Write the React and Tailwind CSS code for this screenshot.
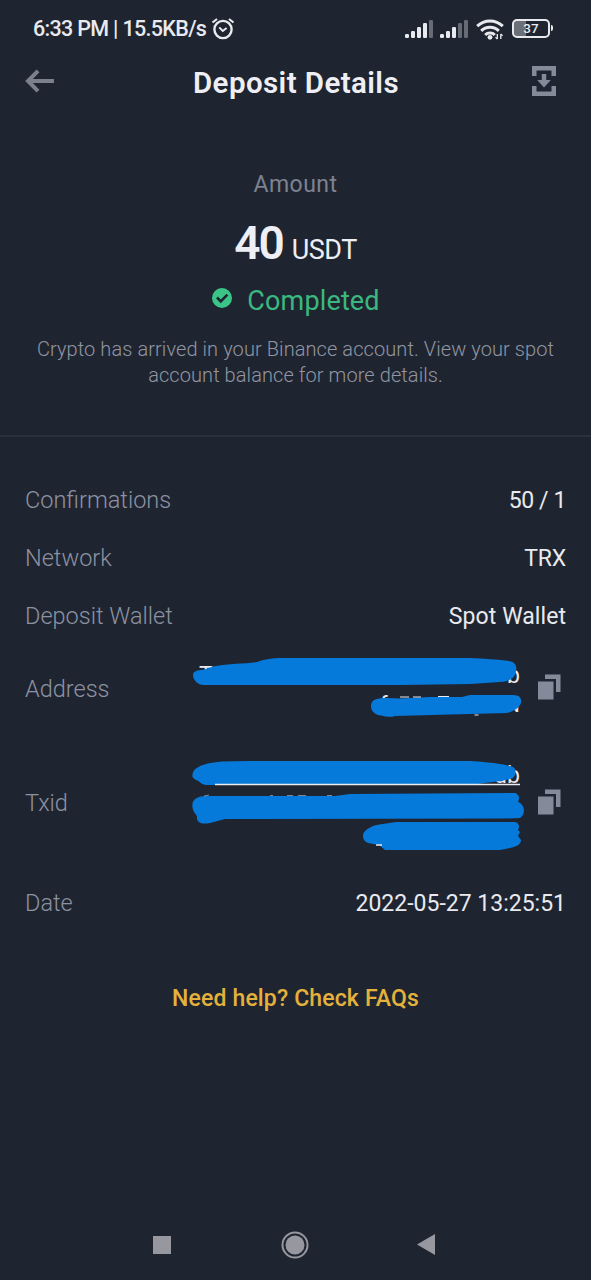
import React from 'react';

const SIGNAL_BARS = [
  { x: 0, h: 4 },
  { x: 6, h: 7 },
  { x: 12, h: 11 },
  { x: 18, h: 15 },
  { x: 24, h: 18 },
];

const SignalIcon = ({ level }) => (
  <svg width="29" height="18" viewBox="0 0 29 18">
    {SIGNAL_BARS.map((bar, idx) => (
      <rect
        key={bar.x}
        x={bar.x}
        y={18 - bar.h}
        width="4"
        height={bar.h}
        rx="1.2"
        fill={idx < level ? '#e9eaef' : '#666b75'}
      />
    ))}
  </svg>
);

const AlarmIcon = () => (
  <svg width="24" height="23" viewBox="0 0 24 23" fill="none" stroke="#e9eaef" strokeWidth="2.4">
    <circle cx="12" cy="12.5" r="8.6" />
    <path d="M1.5 5.5 6 2M22.5 5.5 18 2" strokeWidth="2.2" />
    <path d="m8.2 10.4 3.6 3.6 3.8-3" strokeWidth="2" />
  </svg>
);

const WifiIcon = () => (
  <svg width="28" height="21" viewBox="0 0 28 21" fill="none" stroke="#e9eaef" strokeWidth="3">
    <path d="M1.2 7.2C8.4.2 19.6.2 26.8 7.2" />
    <path d="M5.2 11.8c4.9-4.7 12.7-4.7 17.6 0" />
    <path d="M9.2 16c2.5-2.6 7.1-2.6 9.6 0" />
    <circle cx="14" cy="18.3" r="2.4" fill="#e9eaef" stroke="none" />
    <path d="M21.3 15v5M24.8 15v5" strokeWidth="1.3" />
    <path d="m19.5 18.2 1.8 1.8M24.8 15l1.8 1.8" strokeWidth="1.2" />
  </svg>
);

const CopyIcon = () => (
  <svg width="23" height="26" viewBox="0 0 23 26" fill="#858a9b" className="mb-[5px]">
    <path d="M7 0.5H22.5V18H18V5H7Z" />
    <path d="M0 7.5H15.5V25.5H0Z" />
  </svg>
);

const StatusBar = () => (
  <div className="flex h-[56px] items-center justify-between pr-[38px] pl-[33px]">
    <div className="flex items-center gap-1">
      <span className="w-[174px] pt-[2px] text-[21.5px] font-medium tracking-[-0.68px] whitespace-nowrap text-[#e9eaef]">
        6:33 PM | 15.5KB/s
      </span>
      <AlarmIcon />
    </div>
    <div className="flex items-center pt-[2px]">
      <SignalIcon level={4} />
      <div className="w-[6px]" />
      <SignalIcon level={3} />
      <div className="w-[7px]" />
      <WifiIcon />
      <div className="w-[8px]" />
      <div className="mb-[2px] flex items-center">
        <div className="flex h-[19px] w-[38px] items-center justify-center rounded-[5px] border-2 border-[#e9eaef] bg-linear-to-r from-[#6a6f78] from-35% to-transparent to-35% text-[13.5px] font-medium text-[#e9eaef]">
          37
        </div>
        <div className="ml-px h-[6px] w-[2px] rounded-r bg-[#e9eaef]" />
      </div>
    </div>
  </div>
);

const Header = () => (
  <div className="flex h-[52px] items-center justify-between pr-[35px] pl-[25px]">
    <svg width="30" height="24" viewBox="0 0 30 24" fill="none" stroke="#7c808c" strokeWidth="4" className="mb-[3px]">
      <path d="M3 12H29M13 1.8 3 12l10 10.2" />
    </svg>
    <h1 className="pt-[3px] pl-[5px] text-[29.5px] font-semibold tracking-[0.42px] text-[#eeeff5]">Deposit Details</h1>
    <svg width="24" height="30" viewBox="0 0 24 30" fill="#858a9b" className="mb-[3px]">
      <path d="M0 0H24V10H19.5V4.5H4.5V10H0Z" />
      <path d="M0 30H24V20H19.5V25.5H4.5V20H0Z" />
      <path d="M9.8 8h4.4v6h4.6L12 21.5 5.2 14H9.8Z" />
    </svg>
  </div>
);

const Label = ({ children }) => (
  <span className="text-[23.5px] font-light text-[#8d92a2]">{children}</span>
);

const DetailRow = ({ label, value, className }) => (
  <div className="flex h-[29px] items-center justify-between">
    <Label>{label}</Label>
    <span className={`pt-px text-[23px] text-[#e9eaef] ${className}`}>{value}</span>
  </div>
);

const HiddenRow = ({ label, children }) => (
  <div className="mb-[13px] flex items-center justify-between pr-[5px]">
    <Label>{label}</Label>
    <div className="flex items-center gap-[18px]">
      <div className="relative w-[321px] text-[23px] leading-[29px] text-[#e9eaef]">{children}</div>
      <CopyIcon />
    </div>
  </div>
);

export default function App() {
  return (
    <div className="flex h-[1280px] w-[591px] flex-col overflow-hidden bg-[#1f2530] font-['Roboto',sans-serif]">
      <StatusBar />
      <Header />

      <section className="flex h-[329px] flex-col items-center border-b-2 border-[#2b313b] pt-[63px]">
        <p className="text-[23px] leading-[28px] tracking-[0.5px] text-[#7d8292]">Amount</p>
        <p className="mt-[18px] flex items-baseline gap-[9px] leading-[52px] text-[#eeeff5]">
          <span className="text-[46px] font-semibold tracking-[-2px]">40</span>
          <span className="text-[27px] tracking-[-0.5px]">USDT</span>
        </p>
        <div className="mt-[9px] flex items-center gap-[15px] pl-px">
          <svg width="20" height="20" viewBox="0 0 20 20" className="mb-[6px]">
            <circle cx="10" cy="10" r="10" fill="#3bc487" />
            <path d="m5 9.5 3.8 3.8 6.6-6.6" fill="none" stroke="#1f2530" strokeWidth="2.6" />
          </svg>
          <span className="text-[27px] leading-[32px] tracking-[0.15px] text-[#3bb87f]">Completed</span>
        </div>
        <p className="mt-[19px] text-center text-[20px] leading-[26px] font-light tracking-[0.08px] whitespace-nowrap text-[#9195a4]">
          Crypto has arrived in your Binance account. View your spot
          <br />
          account balance for more details.
        </p>
      </section>

      <section className="flex flex-col gap-[29px] pt-[49.5px] pr-[25px] pl-[25px]">
        <DetailRow label="Confirmations" value="50 / 1" className="tracking-[-0.4px]" />
        <DetailRow label="Network" value="TRX" className="tracking-[-0.2px]" />
        <DetailRow label="Deposit Wallet" value="Spot Wallet" className="tracking-[0.07px]" />

        <HiddenRow label="Address">
          <div className="flex justify-between">
            <span>T</span>
            <span>b</span>
          </div>
          <div className="flex justify-between pl-[181px] text-[22px]">
            <span>f</span>
            <span>N</span>
          </div>
          <svg className="absolute top-[-5px] left-[-9px]" width="334" height="66" viewBox="190 656 334 66" fill="#067adb">
            <path d="M193 675C193 671 198 670 203 670L213 666.5C230 663 245 664 257 662C266 659 272 658 282 658H470C482 659 500 659 511 661.5C516 663 517 667 516 671C515 678 511 681 500 682L470 684 400 685H204C198 685 193 680 193 675Z" />
            <path d="M371 706C371 700 376 698 386 698L400 698.5 430 697H462L470 695H513C520 695 522 699 521 703C519 708 514 711 507 713L450 714.5 395 716C390 718 384 716 378 715C373 713 371 710 371 706Z" />
            <path d="M400 697h9M413 697h8M438 696.5h11M474.5 715h4" stroke="#e9eaef" strokeWidth="1.2" />
          </svg>
        </HiddenRow>

        <HiddenRow label="Txid">
          <div className="flex justify-between">
            <span />
            <span>db</span>
          </div>
          <div className="h-[58px]" />
          <svg className="absolute top-[-5px] left-[-9px]" width="336" height="98" viewBox="190 756 336 98" fill="#067adb">
            <path d="M192.5 775C193 766 207 763 222 761.5L250 761H470C487 762 505 764 513 767C517 770 516 775 513 778C501 782 485 782 472 785H206C200 784 200 781 196 780C193 778 192 777 192.5 775Z" />
            <path d="M192.5 804C193 799 198 796 206 796L335 796 350 794 515 793C519 794 520 798 518 802C525 804 526 814 520 818L505 818.5 225 819 210 823C201 825 196 822 197 816C193 812 192 808 192.5 804Z" />
            <path d="M363 835C364 829 373 825 383 824L396 822H515C519 823 520 827 518 830L520 832 518 836 521 840C521 845 515 847 510 848L500 850H385L379 845 368 843C364 841 363 839 363 835Z" />
            <path d="M215 784.5H520M376 845h6" stroke="#e9eaef" strokeWidth="1.4" />
            <path d="M204 796l5-1M270 795.5h3M287 795.5h6M298 795.5h8M327 795.5h5" stroke="#a9b4c2" strokeWidth="0.7" />
          </svg>
        </HiddenRow>

        <DetailRow label="Date" value="2022-05-27 13:25:51" />
      </section>

      <p className="mt-[66.5px] text-center text-[23px] leading-[28px] font-medium tracking-[0.15px] text-[#e4b23c]">
        Need help? Check FAQs
      </p>

      <nav className="mt-auto flex h-[72px] items-center justify-between pt-px pr-[156px] pl-[153px]">
        <div className="size-[18px] bg-[#97979f]" />
        <svg width="28" height="28" viewBox="0 0 28 28" className="ml-[2px]">
          <circle cx="14" cy="14" r="12.5" fill="none" stroke="#97979f" strokeWidth="2" />
          <circle cx="14" cy="14" r="9.5" fill="#97979f" />
        </svg>
        <svg width="18" height="21" viewBox="0 0 18 21" fill="#97979f">
          <path d="M18 0V21L0 10.5Z" />
        </svg>
      </nav>
    </div>
  );
}
